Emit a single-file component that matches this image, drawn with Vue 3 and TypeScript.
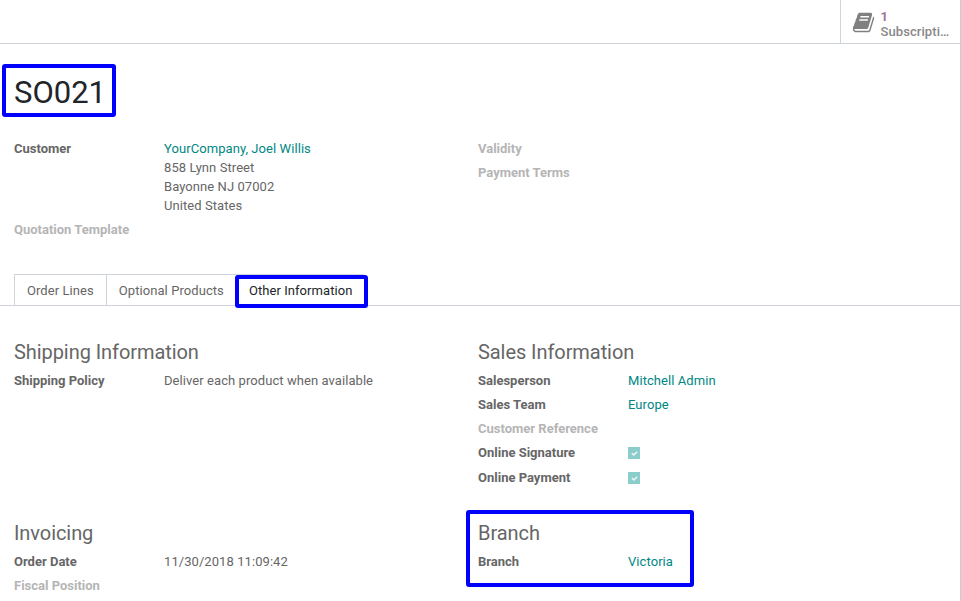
<script setup lang="ts">
interface Field {
  label: string
  value?: string
  lines?: string[]
  link?: boolean
  checked?: boolean
}
interface Group {
  title: string
  fields: Field[]
  marked?: boolean
}

const tabs: string[] = ['Order Lines', 'Optional Products', 'Other Information']
const activeTab = 'Other Information'

const header: Field[][] = [
  [
    {
      label: 'Customer',
      value: 'YourCompany, Joel Willis',
      link: true,
      lines: ['858 Lynn Street', 'Bayonne NJ 07002', 'United States'],
    },
    { label: 'Quotation Template' },
  ],
  [{ label: 'Validity' }, { label: 'Payment Terms' }],
]

const groups: Group[] = [
  {
    title: 'Shipping Information',
    fields: [{ label: 'Shipping Policy', value: 'Deliver each product when available' }],
  },
  {
    title: 'Sales Information',
    fields: [
      { label: 'Salesperson', value: 'Mitchell Admin', link: true },
      { label: 'Sales Team', value: 'Europe', link: true },
      { label: 'Customer Reference' },
      { label: 'Online Signature', checked: true },
      { label: 'Online Payment', checked: true },
    ],
  },
  {
    title: 'Invoicing',
    fields: [{ label: 'Order Date', value: '11/30/2018 11:09:42' }, { label: 'Fiscal Position' }],
  },
  { title: 'Branch', marked: true, fields: [{ label: 'Branch', value: 'Victoria', link: true }] },
]

const isEmpty = (f: Field): boolean => !f.value && !f.checked
</script>

<template>
  <main class="sheet">
    <div class="button-box">
      <button class="stat">
        <svg class="book" viewBox="0 0 1792 1792">
          <path
            d="M1703 478q40 57 18 129l-275 906q-19 64-76.500 107.500t-122.500 43.500h-923q-77 0-148.500-53.500t-99.500-131.500q-24-67-2-127 0-4 3-27t4-37q1-8-3-21.500t-3-19.500q2-11 8-21t16.500-23.500 16.500-23.500q23-38 45-91.500t30-91.500q3-10 .5-30t-.5-28q3-11 17-28t17-23q21-36 42-92t25-90q1-9-2.500-32t.5-28q4-13 22-30.500t22-22.500q19-26 42.500-84.500t27.500-96.500q1-8-3-25.500t-2-26.500q2-8 9-18t18-23 17-21q8-12 16.500-30.500t15-35 16-36 19.500-32 26.500-23.500 36-11.500 47.500 5.500l-1 3q38-9 51-9h761q74 0 114 56t18 130l-274 906q-36 119-71.500 153.500t-128.500 34.500h-869q-27 0-38 15-11 16-1 43 24 70 144 70h923q29 0 56-15.500t35-41.500l300-987q7-22 5-57 38 15 59 43zm-1064 2q-4 13 2 22.500t20 9.500h608q13 0 25.500-9.500t16.500-22.500l21-64q4-13-2-22.500t-20-9.500h-608q-13 0-25.500 9.500t-16.500 22.500zm-83 256q-4 13 2 22.500t20 9.500h608q13 0 25.500-9.500t16.500-22.500l21-64q4-13-2-22.500t-20-9.500h-608q-13 0-25.500 9.500t-16.500 22.500z"
          />
        </svg>
        <span class="stat-info">
          <span class="stat-value">1</span>
          <span class="stat-text">Subscripti…</span>
        </span>
      </button>
    </div>

    <h1 class="title"><span class="marked">SO021</span></h1>

    <section class="columns header">
      <div v-for="(col, i) in header" :key="i">
        <div v-for="f in col" :key="f.label" class="field">
          <span class="label" :class="{ empty: isEmpty(f) }">{{ f.label }}</span>
          <div class="value">
            <a v-if="f.link">{{ f.value }}</a>
            <div v-for="line in f.lines" :key="line">{{ line }}</div>
          </div>
        </div>
      </div>
    </section>

    <nav class="tabs">
      <a v-for="t in tabs" :key="t" class="tab" :class="{ active: t === activeTab, marked: t === activeTab }">{{ t }}</a>
    </nav>

    <section class="columns body">
      <div v-for="g in groups" :key="g.title" class="group" :class="{ marked: g.marked }">
        <h2>{{ g.title }}</h2>
        <div v-for="f in g.fields" :key="f.label" class="field" :class="{ toggle: f.checked }">
          <span class="label" :class="{ empty: isEmpty(f) }">{{ f.label }}</span>
          <div class="value">
            <span v-if="f.checked" class="checkbox">
              <svg viewBox="0 0 1792 1792">
                <path
                  d="M1671 566q0 40-28 68l-724 724-136 136q-28 28-68 28t-68-28l-136-136-362-362q-28-28-28-68t28-68l136-136q28-28 68-28t68 28l294 295 656-657q28-28 68-28t68 28l136 136q28 28 28 68z"
                />
              </svg>
            </span>
            <a v-else-if="f.link">{{ f.value }}</a>
            <template v-else>{{ f.value }}</template>
          </div>
        </div>
      </div>
    </section>
  </main>
</template>

<style>
body {
  overflow: hidden;
  background: #fff;
}
</style>

<style scoped>
.sheet {
  box-sizing: border-box;
  width: 961px;
  height: 601px;
  overflow: hidden;
  border-right: 1px solid #c9ccd2;
  font: 13px/19px Roboto, sans-serif;
  color: #666;
}
.button-box {
  box-sizing: border-box;
  display: flex;
  justify-content: flex-end;
  height: 44px;
  border-bottom: 1px solid #ced4da;
}
.stat {
  display: flex;
  align-items: center;
  box-sizing: border-box;
  width: 120px;
  padding: 3px 0 0 11px;
  border: 0;
  border-left: 1px solid #ced4da;
  background: none;
  font: 500 13px/15px Roboto, sans-serif;
  letter-spacing: 0.08px;
  color: #888;
  text-align: left;
}
.book {
  width: 23px;
  height: 23px;
  margin: 0 5.5px 2px 0;
  fill: #808080;
}
.stat-info {
  display: flex;
  flex-direction: column;
  padding-top: 1px;
}
.stat-value {
  font-weight: 700;
  color: #a1739a;
}
.marked {
  position: relative;
}
.marked::after {
  content: '';
  position: absolute;
  border: 4px solid #00f;
  border-radius: 3px;
  pointer-events: none;
}
.title {
  margin: 26px 0 0 14px;
  font-size: 31px;
  font-weight: 400;
  line-height: 46px;
  color: #212529;
}
.title .marked::after {
  top: -10px;
  left: -12px;
  width: 106px;
  height: 45px;
}
.columns {
  display: grid;
  grid-template-columns: 464px 1fr;
  padding-left: 14px;
}
.header {
  margin-top: 23px;
  height: 135px;
}
.field {
  display: flex;
  min-height: 19px;
  margin-bottom: 5px;
}
.field.toggle {
  margin-bottom: 6px;
}
.label {
  width: 150px;
  flex: none;
  font-weight: 700;
}
.label.empty {
  color: #b5b5b5;
}
.value {
  letter-spacing: 0.07px;
}
.value a {
  color: #008784;
}
.tabs {
  display: flex;
  box-sizing: border-box;
  height: 32px;
  padding-left: 14px;
  border-bottom: 1px solid #ced4da;
  letter-spacing: 0.07px;
}
.tab {
  box-sizing: border-box;
  padding: 6px 12px;
  border-top: 1px solid #ced4da;
  border-left: 1px solid #ced4da;
}
.tab.active {
  color: #212529;
}
.tab.marked::after {
  inset: 0 -1px -3px -2px;
  width: 125px;
}
.body {
  grid-template-rows: 181px auto;
  margin-top: 35px;
}
h2 {
  margin: 0 0 7px;
  font-size: 20px;
  font-weight: 400;
  line-height: 23px;
  letter-spacing: -0.07px;
}
.group.marked::after {
  left: -12px;
  top: -12px;
  width: 220px;
  height: 69px;
}
.checkbox {
  display: flex;
  align-items: center;
  justify-content: center;
  width: 12px;
  height: 12px;
  margin-top: 4px;
  background: #8acdca;
}
.checkbox svg {
  width: 7px;
  height: 7px;
  fill: #f0f4f4;
}
</style>
